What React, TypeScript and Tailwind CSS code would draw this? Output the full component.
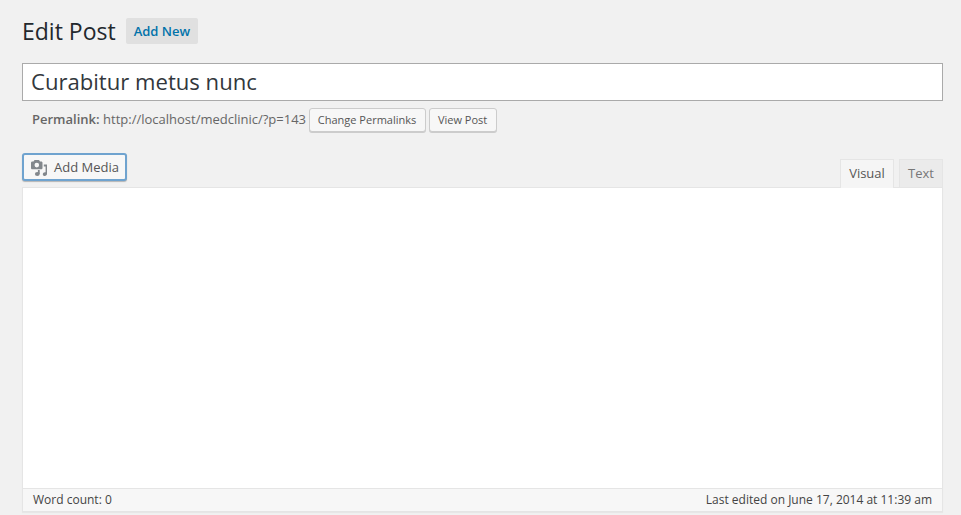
import React from 'react';

function MediaIcon() {
  return (
    <svg width="18" height="18" viewBox="0 0 18 18" className="text-[#82878c]" fill="currentColor">
      {/* camera */}
      <path
        fillRule="evenodd"
        d="M4.500 1h4.500l1 1.500h1.200c.7 0 1.300.6 1.300 1.300v5.200c0 .7-.6 1.300-1.300 1.300H2.300C1.600 10.300 1 9.700 1 9V3.800C1 3.100 1.600 2.500 2.300 2.500h1.200zM6.800 3.800a2.300 2.300 0 1 0 0 4.600 2.300 2.300 0 0 0 0-4.600z"
      />
      {/* note */}
      <path d="M13.800 5.500h3.200v9.300c0 1.300-1 2.200-2.200 2.200s-2-.8-2-1.800c0-1.100 1-2 2.200-2h.6V7.500h-1.800z" />
      <ellipse cx="7.300" cy="15" rx="2.400" ry="2.100" />
      <rect x="7.900" y="11" width="1.800" height="4" />
    </svg>
  );
}

export default function App() {
  return (
    <div className="h-[515px] w-[961px] overflow-hidden bg-[#f1f1f1] pl-[22px] pr-[18px] pt-[18px] font-['Open_Sans',sans-serif] text-[13px] text-[#444]">
      {/* Heading */}
      <div className="flex h-[26px] items-center">
        <h1 className="-mt-[1px] text-[23px] leading-[26px] font-normal text-[#23282d]">Edit Post</h1>
        <a className="ml-[10px] flex h-[26px] items-center rounded-[2px] bg-[#e0e0e0] px-2 pt-[1px] text-[13px] font-semibold text-[#0073aa]">
          Add New
        </a>
      </div>

      {/* Title */}
      <div className="mt-[19px] flex h-[38px] items-center border border-[#aaa] bg-white pl-2 text-[22.1px] text-[#32373c]">
        Curabitur metus nunc
      </div>

      {/* Permalink */}
      <div className="mt-[7px] flex h-6 items-center pl-[10px] text-[13px] text-[#666]">
        <strong className="font-semibold">Permalink:</strong>
        <span className="ml-[3.5px]">http://localhost/medclinic/?p=143</span>
        <button className="ml-[2.5px] h-6 w-[117px] rounded-[3px] border border-[#ccc] bg-[#f7f7f7] text-[11px] text-[#555] shadow-[0_1px_0_#ccc]">
          Change Permalinks
        </button>
        <button className="ml-[3px] h-6 w-[68px] rounded-[3px] border border-[#ccc] bg-[#f7f7f7] text-[11px] text-[#555] shadow-[0_1px_0_#ccc]">
          View Post
        </button>
      </div>

      {/* Editor toolbar */}
      <div className="mt-[21px] flex h-[34px] items-start justify-between">
        <button className="flex h-[28px] w-[105px] items-center gap-[6px] rounded-[3px] border-2 border-[#6fa3cf] bg-[#f7f7f7] pl-[6px] pt-[1px] text-[13px] text-[#555] shadow-[0_1px_1px_rgba(0,0,0,0.25)]">
          <MediaIcon />
          Add Media
        </button>
        <div className="mt-[6px] flex h-7 items-start">
          <div className="relative z-10 flex h-[29px] w-[54px] items-center justify-center border border-b-0 border-[#e5e5e5] bg-[#f5f5f5] text-[13px] text-[#555]">
            Visual
          </div>
          <div className="ml-[5px] flex h-7 w-[44px] items-center justify-center border border-b-0 border-[#e5e5e5] bg-[#ebebeb] text-[13px] text-[#777]">
            Text
          </div>
        </div>
      </div>

      {/* Editor */}
      <div className="flex h-[325px] flex-col border border-[#e5e5e5] bg-white shadow-[0_1px_1px_rgba(0,0,0,0.04)]">
        <div className="flex-1" />
        <div className="flex h-[23px] items-center justify-between border-t border-[#e5e5e5] bg-[#f7f7f7] pl-[10px] pr-[10px] text-[12px] text-[#444]">
          <span>Word count: 0</span>
          <span>Last edited on June 17, 2014 at 11:39 am</span>
        </div>
      </div>
    </div>
  );
}
